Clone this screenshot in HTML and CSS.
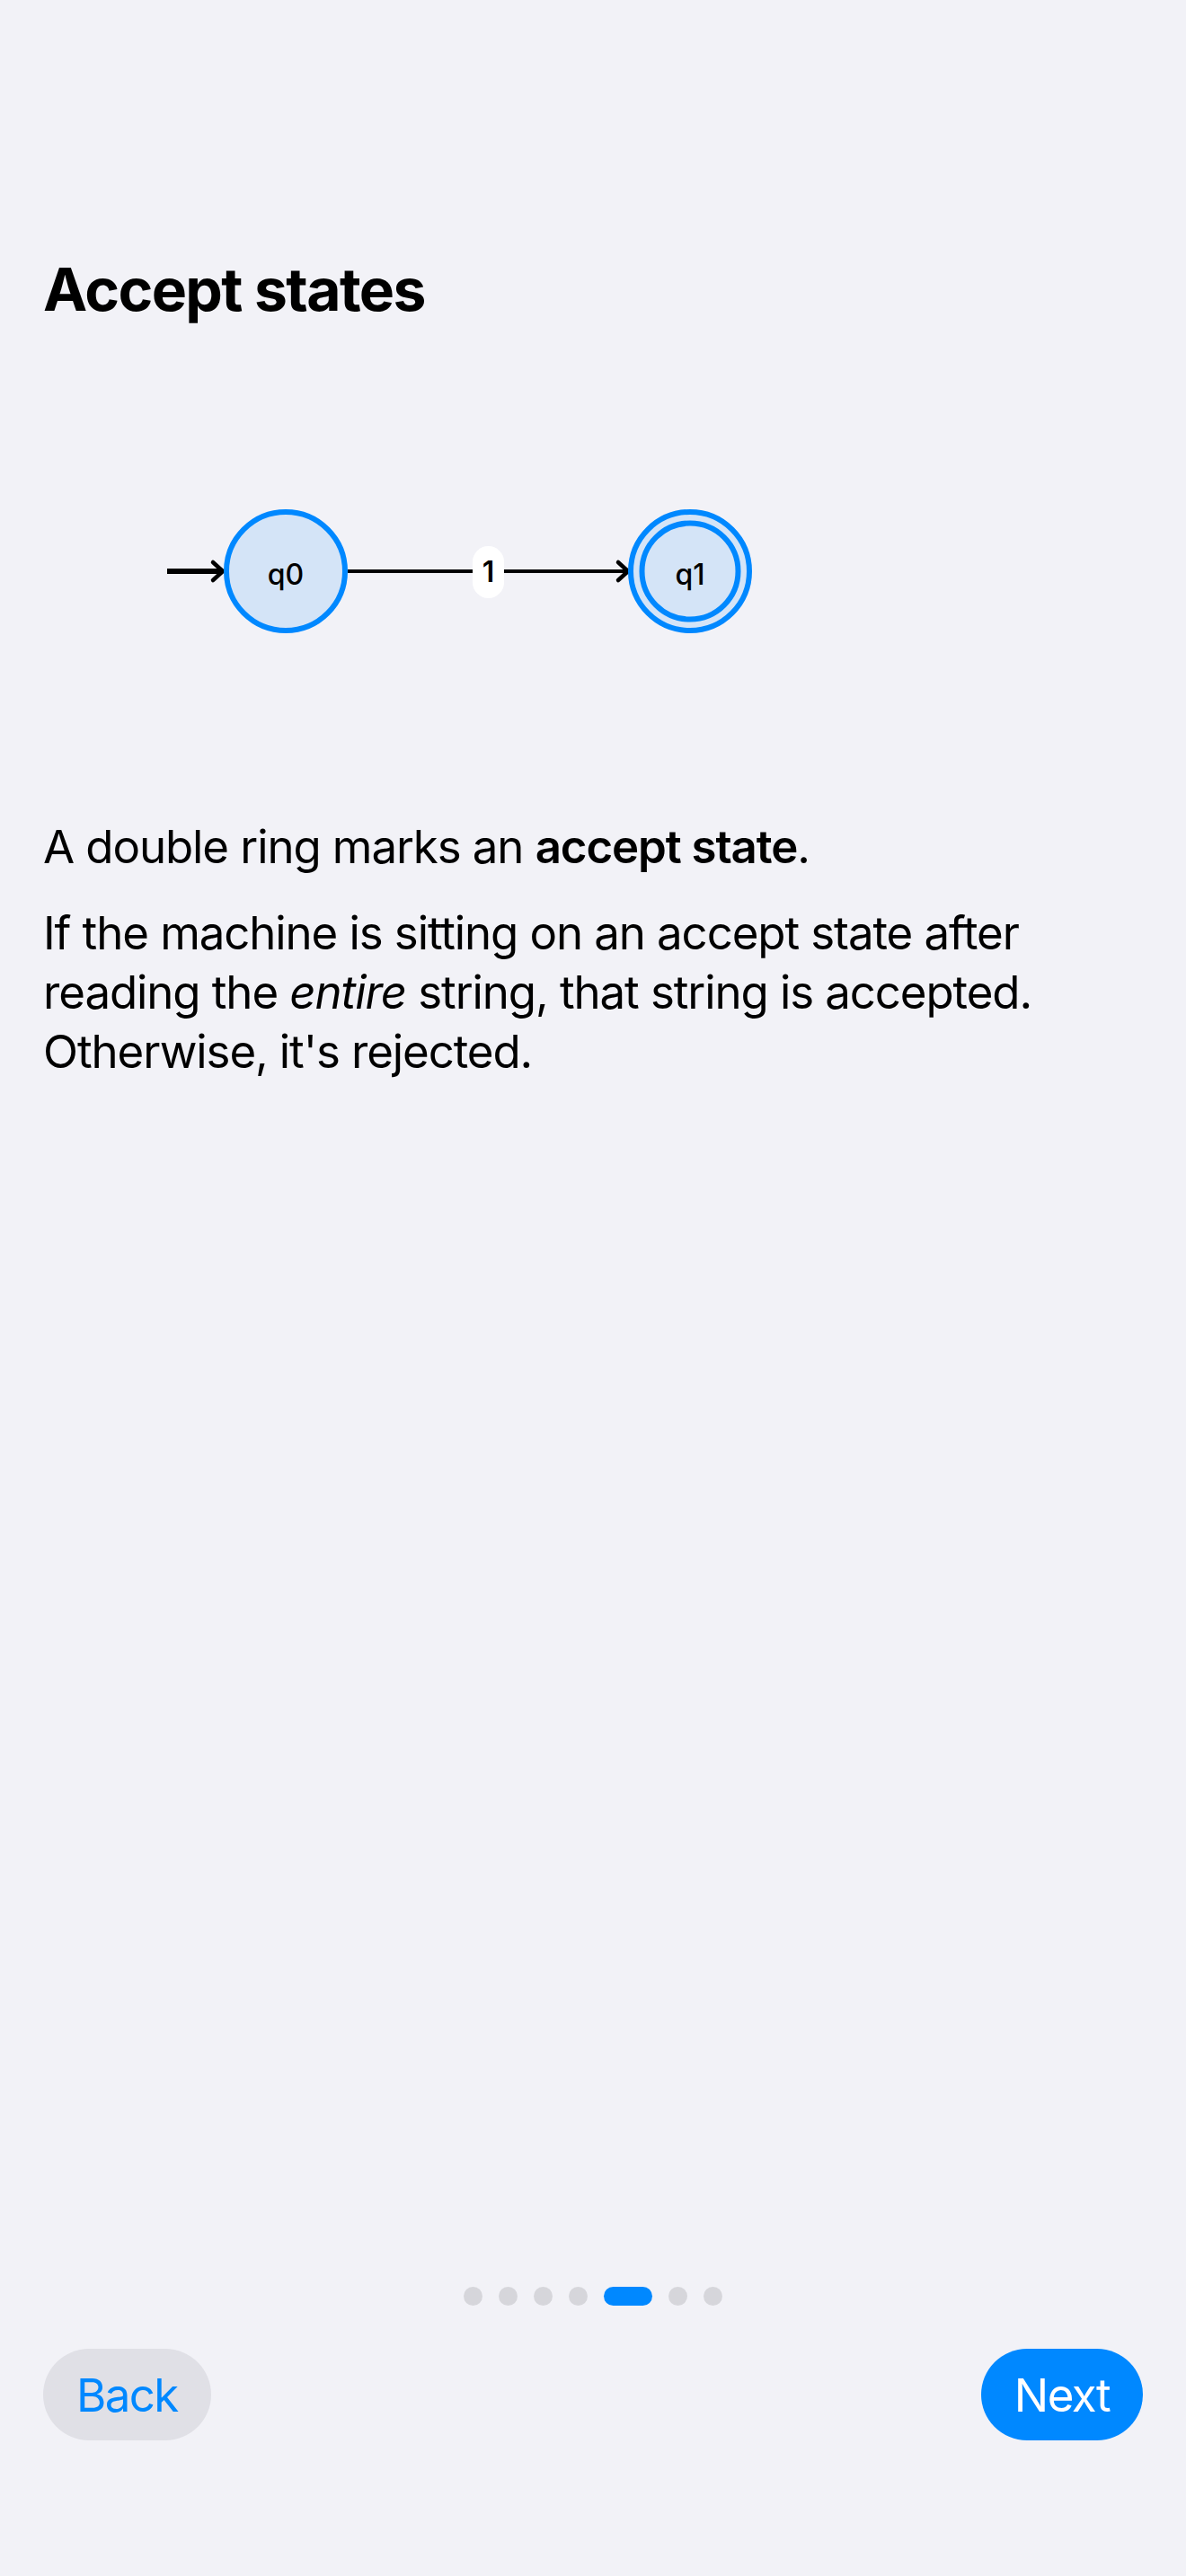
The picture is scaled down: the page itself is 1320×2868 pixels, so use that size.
FILE: index.html
```html
<!DOCTYPE html>
<html lang="en">
<head>
<meta charset="utf-8">
<title>Accept states</title>
<link rel="stylesheet" href="styles.css">
</head>
<body>
<div class="page">
  <main class="content">
    <h1 class="title">Accept states</h1>
    <div class="diagram">
      <svg class="diagram-svg" viewBox="0 0 1224 200" width="1224" height="200">
        <line class="start" x1="138" y1="100" x2="197" y2="100"/>
        <polyline class="head" points="189,90 200,100 189,110"/>
        <circle class="state" cx="270" cy="100" r="66"/>
        <line class="edge" x1="339" y1="100" x2="648" y2="100"/>
        <polyline class="head" points="640,90 651,100 640,110"/>
        <rect class="pill" x="478" y="72" width="35" height="58" rx="17.5"/>
        <circle class="state" cx="720" cy="100" r="66"/>
        <circle class="state" cx="720" cy="100" r="53.5"/>
      </svg>
      <span class="node-label lbl-q0">q0</span>
      <span class="edge-label lbl-e1">1</span>
      <span class="node-label lbl-q1">q1</span>
    </div>
    <p class="para">A double ring marks an <strong>accept state</strong>.</p>
    <p class="para">If the machine is sitting on an accept state after reading the <em>entire</em> string, that string is accepted. Otherwise, it's rejected.</p>
  </main>
  <footer class="footer">
    <div class="dots">
      <span class="dot"></span>
      <span class="dot"></span>
      <span class="dot"></span>
      <span class="dot"></span>
      <span class="dot active"></span>
      <span class="dot"></span>
      <span class="dot"></span>
    </div>
    <div class="nav">
      <button class="btn btn-back">Back</button>
      <button class="btn btn-next">Next</button>
    </div>
  </footer>
</div>
</body>
</html>
```
FILE: styles.css
```css
* { box-sizing: border-box; }
html, body {
  margin: 0;
  padding: 0;
  background: #f2f2f7;
}
body {
  font-family: Inter, "Noto Sans", "Liberation Sans", sans-serif;
  color: #000;
}
.page {
  min-height: 2868px;
  display: flex;
  flex-direction: column;
  padding: 0 48px;
}
.content {
  flex: 1;
  display: flex;
  flex-direction: column;
}
.title {
  margin: 282px 0 0;
  font-size: 66px;
  line-height: 80px;
  font-weight: 700;
  letter-spacing: -1.6px;
}
.diagram {
  position: relative;
  width: 1224px;
  height: 200px;
  margin-top: 174px;
}
.diagram-svg {
  display: block;
}
.diagram .start {
  stroke: #000;
  stroke-width: 6;
}
.diagram .edge {
  stroke: #000;
  stroke-width: 4;
}
.diagram .head {
  fill: none;
  stroke: #000;
  stroke-width: 4.5;
  stroke-linecap: round;
  stroke-linejoin: round;
}
.diagram .state {
  fill: #d4e4f7;
  stroke: #0088ff;
  stroke-width: 6;
}
.diagram .pill {
  fill: #fff;
}
.node-label,
.edge-label {
  position: absolute;
  transform: translate(-50%, -50%);
  font-size: 32px;
  line-height: 1;
  font-weight: 500;
  white-space: nowrap;
}
.edge-label {
  font-weight: 600;
}
.lbl-q0 { left: 270px; top: 103.5px; }
.lbl-e1 { left: 495.5px; top: 101px; }
.lbl-q1 { left: 720px; top: 103.5px; }
.para {
  margin: 30px 0 0;
  font-size: 51px;
  line-height: 66px;
  letter-spacing: -1.1px;
}
.diagram + .para {
  margin-top: 174px;
}
.para strong { font-weight: 600; }
.para em { font-style: italic; }
.footer {
  display: flex;
  flex-direction: column;
  gap: 48px;
  padding-bottom: 151px;
}
.dots {
  display: flex;
  justify-content: center;
  gap: 18px;
}
.dot {
  width: 21px;
  height: 21px;
  border-radius: 10.5px;
  background: #d6d6db;
}
.dot.active {
  width: 54px;
  background: #0088ff;
}
.nav {
  display: flex;
  justify-content: space-between;
}
.btn {
  height: 102px;
  padding: 0 37px;
  border: none;
  border-radius: 51px;
  font-family: Inter, "Noto Sans", sans-serif;
  font-size: 51px;
  font-weight: 400;
  letter-spacing: -1.6px;
}
.btn-back {
  background: #e0e0e6;
  color: #0088ff;
}
.btn-next {
  background: #0088ff;
  color: #fff;
}
```
